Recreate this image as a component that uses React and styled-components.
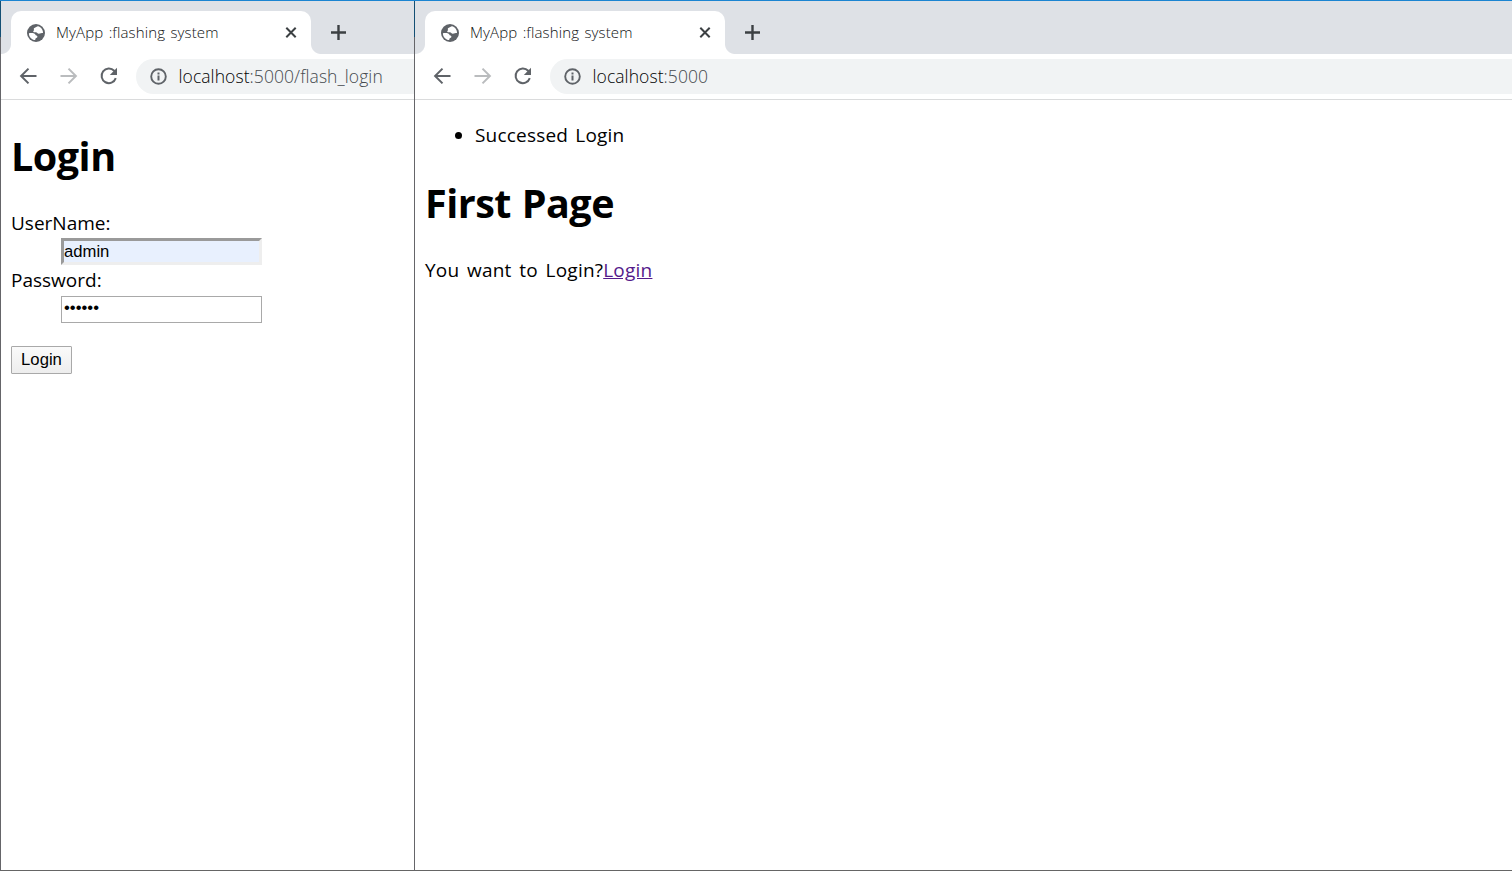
import React from "react";
import styled, { createGlobalStyle } from "styled-components";

const Global = createGlobalStyle`
  * { box-sizing: border-box; }
  body { margin: 0; background: #fff; overflow: hidden; }
`;

const Desktop = styled.div`
  display: flex;
  width: 1512px;
  height: 871px;
  font-family: "Open Sans", "Noto Sans", sans-serif;
`;

const Window = styled.section`
  display: flex;
  flex-direction: column;
  flex: ${(p) => (p.$width ? `0 0 ${p.$width}px` : "1")};
  min-width: 0;
  overflow: hidden;
  background:
    linear-gradient(#1b84d1, #1b84d1) 0 0 / 100% 1px no-repeat,
    linear-gradient(#134f74 0 37px, #656569 37px) 0 0 / 1px 100% no-repeat,
    linear-gradient(#656565, #656565) 0 100% / 100% 1px no-repeat,
    #fff;
  padding: 1px 0 1px 1px;
`;

const TabStrip = styled.div`
  display: flex;
  flex: 0 0 53px;
  padding: 10px 0 0 10px;
  background: #dee1e6;
`;

const Tab = styled.div`
  position: relative;
  display: flex;
  align-items: center;
  width: 300px;
  height: 43px;
  padding: 0 11px 0 16px;
  border-radius: 10px 10px 0 0;
  background: #fff;
  &::before, &::after {
    content: "";
    position: absolute;
    bottom: 0;
    width: 10px;
    height: 10px;
  }
  &::before { left: -10px; background: radial-gradient(circle at 0 0, transparent 9.5px, #fff 10.5px); }
  &::after { right: -10px; background: radial-gradient(circle at 100% 0, transparent 9.5px, #fff 10.5px); }
`;

const Title = styled.span`
  flex: 1;
  margin-left: 11px;
  padding-bottom: 2px;
  font-size: 15px;
  font-weight: 300;
  letter-spacing: 0.14px;
  word-spacing: 1.2px;
  line-height: 20px;
  color: #101214;
  white-space: nowrap;
`;

const NewTab = styled.div`
  display: flex;
  align-items: center;
  height: 42px;
  margin-left: 19px;
`;

const Toolbar = styled.div`
  display: flex;
  align-items: center;
  flex: 0 0 46px;
  padding-left: 18px;
  border-bottom: 1px solid #dadbdc;
  background: #fff;
`;

const Nav = styled.div`
  display: flex;
  gap: 20px;
  padding-bottom: 1px;
`;

const Omnibox = styled.div`
  display: flex;
  align-items: center;
  flex: 1;
  height: 35px;
  margin-left: 17px;
  padding: 0 0 1px 12px;
  border-radius: 18px 0 0 18px;
  background: #f1f3f4;
`;

const Url = styled.span`
  margin-left: 10.5px;
  font-size: 17.5px;
  font-weight: 300;
  letter-spacing: 0.08px;
  line-height: 24px;
  color: #45494e;
  white-space: nowrap;
`;

const Host = styled.span`
  color: #000;
`;

const Page = styled.main`
  flex: 1;
  padding: ${(p) => p.$top}px 10px 0;
  font-size: 19px;
  line-height: 27px;
  color: #000;
`;

const Heading = styled.h1`
  margin: 0;
  padding-bottom: 2px;
  font-size: 39.5px;
  line-height: 52px;
  font-weight: 700;
  letter-spacing: -0.5px;
  word-spacing: 1px;
`;

const Fields = styled.dl`
  margin: 26px 0 23px;
`;

const Label = styled.dt`
  height: ${(p) => p.$height}px;
  line-height: 27px;
`;

const Field = styled.dd`
  height: ${(p) => p.$height}px;
  margin: 0 0 0 50px;
`;

const Input = styled.input`
  display: block;
  width: 201px;
  height: 27px;
  padding: ${(p) => (p.$filled ? "0" : "0 2px 3px")};
  border: ${(p) => (p.$filled ? "3px solid" : "1px solid")};
  border-color: ${(p) => (p.$filled ? "#9a9a9a #eee #eee #9a9a9a" : "#a9a9a9")};
  border-radius: 0;
  outline: 0;
  background: ${(p) => (p.$filled ? "#e8f0fe" : "#fff")};
  font: 16.67px "Liberation Sans", sans-serif;
  color: #000;
`;

const Submit = styled.button`
  display: block;
  width: 61px;
  height: 28px;
  padding: 0 0 1px;
  border: 1px solid #a9a9a9;
  border-radius: 1px;
  background: linear-gradient(#fafafa, #ededed);
  font: 16.67px "Liberation Sans", sans-serif;
  color: #000;
`;

const Messages = styled.ul`
  margin: 0 0 28px;
  padding-left: 50px;
  letter-spacing: 0.2px;
  word-spacing: 2px;
`;

const Paragraph = styled.p`
  margin: 26px 0 0;
  letter-spacing: 0.22px;
  word-spacing: 2.5px;
`;

const Link = styled.a`
  color: #551a8b;
  text-decoration: underline;
`;

const Globe = () => (
  <svg width="18" height="18" viewBox="0 0 18 18">
    <circle cx="9" cy="9" r="9" fill="#5f6368" />
    <path fill="#fff" d="M11 2.300C9.500 2.300 9 3.500 8 3.700c-1.200.3-1.500 1.300-1 2 .4.600-.8.900-.8 1.700 0 .8 1.500.7 2.600.8 1.500.1 1.600 1.600 3 1.600 1.600 0 2.700-.7 4.200-.7C16.200 5.800 14 3 11 2.300zM1.900 9.200c1.500-.2 3.700-.3 5.300.2 1.300.5 1 1.600 2.200 2.100.8.400 1.300.900.9 1.700-.5.900-1.800.8-2 1.800-.1.400 0 .700 0 1C4.700 15.900 1.900 13 1.900 9.200z" />
  </svg>
);

const Close = () => (
  <svg width="18" height="18" viewBox="0 0 18 18" stroke="#3c4043" strokeWidth="2">
    <path d="M4.3 3.8l9.4 9.4M13.7 3.8l-9.4 9.4" />
  </svg>
);

const Plus = () => (
  <svg width="16" height="16" viewBox="0 0 16 16" stroke="#3c4043" strokeWidth="2.4">
    <path d="M8.5 1v15M1 8.5h15" />
  </svg>
);

const Arrow = ({ forward }) => (
  <svg width="20" height="20" viewBox="0 0 20 20" fill="none" stroke={forward ? "#babcbe" : "#5f6368"} strokeWidth="2">
    <path d={forward ? "M1.500 10h15M9.500 2.600l7.400 7.400-7.400 7.400" : "M17.500 10H2.500M9.500 2.600L2.100 10l7.400 7.400"} />
  </svg>
);

const Reload = () => (
  <svg width="20" height="20" viewBox="0 0 20 20">
    <path fill="none" stroke="#5f6368" strokeWidth="2" d="M16.8 12.2A7.3 7.3 0 1 1 15.2 4.8L17 6.6" />
    <path fill="#5f6368" d="M18 1.8V9h-7.2z" />
  </svg>
);

const Info = () => (
  <svg width="20" height="20" viewBox="0 0 20 20">
    <circle cx="10.5" cy="10.5" r="7.3" fill="none" stroke="#5f6368" strokeWidth="1.9" />
    <path fill="#5f6368" d="M9.5 9.5h2v5h-2zM9.5 6.5h2v2h-2z" />
  </svg>
);

function Browser({ width, path, top, children }) {
  return (
    <Window $width={width}>
      <TabStrip>
        <Tab>
          <Globe />
          <Title>MyApp :flashing system</Title>
          <Close />
        </Tab>
        <NewTab><Plus /></NewTab>
      </TabStrip>
      <Toolbar>
        <Nav>
          <Arrow />
          <Arrow forward />
          <Reload />
        </Nav>
        <Omnibox>
          <Info />
          <Url><Host>localhost</Host>{path}</Url>
        </Omnibox>
      </Toolbar>
      <Page $top={top}>{children}</Page>
    </Window>
  );
}

export default function App() {
  return (
    <>
      <Global />
      <Desktop>
        <Browser width={414} path=":5000/flash_login" top={30}>
          <Heading>Login</Heading>
          <Fields>
            <Label $height={28}>UserName:</Label>
            <Field $height={29}><Input $filled defaultValue="admin" /></Field>
            <Label $height={29}>Password:</Label>
            <Field $height={27}><Input type="password" defaultValue="secret" /></Field>
          </Fields>
          <Submit>Login</Submit>
        </Browser>
        <Browser path=":5000" top={22}>
          <Messages><li>Successed Login</li></Messages>
          <Heading>First Page</Heading>
          <Paragraph>You want to Login?<Link>Login</Link></Paragraph>
        </Browser>
      </Desktop>
    </>
  );
}
